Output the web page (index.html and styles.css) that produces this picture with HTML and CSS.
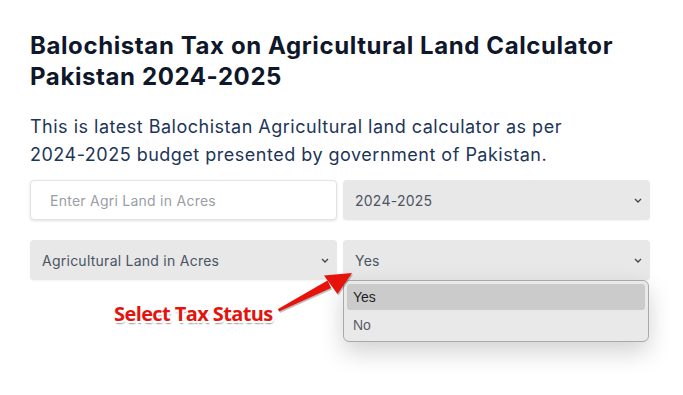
FILE: index.html
```html
<!DOCTYPE html>
<html lang="en">
<head>
<meta charset="utf-8">
<title>Balochistan Tax on Agricultural Land Calculator</title>
<link rel="stylesheet" href="styles.css">
</head>
<body>
<main class="page">
  <h1 class="title">Balochistan Tax on Agricultural Land Calculator Pakistan 2024-2025</h1>
  <p class="intro">This is latest Balochistan Agricultural land calculator as per 2024-2025 budget presented by government of Pakistan.</p>
  <div class="form">
    <div class="field input"><span class="placeholder">Enter Agri Land in Acres</span></div>
    <div class="field select"><span>2024-2025</span><svg class="chev" viewBox="0 0 8 5"><path d="M1 1l3 3 3-3" fill="none" stroke="#444" stroke-width="1.3"/></svg></div>
    <div class="field select"><span>Agricultural Land in Acres</span><svg class="chev" viewBox="0 0 8 5"><path d="M1 1l3 3 3-3" fill="none" stroke="#444" stroke-width="1.3"/></svg></div>
    <div class="field select open"><span>Yes</span><svg class="chev" viewBox="0 0 8 5"><path d="M1 1l3 3 3-3" fill="none" stroke="#444" stroke-width="1.3"/></svg>
      <ul class="menu">
        <li class="opt active">Yes</li>
        <li class="opt">No</li>
      </ul>
    </div>
  </div>
  <div class="note">Select Tax Status</div>
  <svg class="arrow" viewBox="0 0 683 395" width="683" height="395">
    <g transform="translate(1,1.5)" fill="rgba(0,0,0,0.25)">
      <polygon points="278,309 279,311.5 331,288 327.5,280.5"/>
      <polygon points="352,273 324,275.5 337.5,294"/>
    </g>
    <g fill="#e8120c">
      <polygon points="278,309 279,311.5 331,288 327.5,280.5"/>
      <polygon points="352,273 324,275.5 337.5,294"/>
    </g>
  </svg>
</main>
</body>
</html>
```
FILE: styles.css
```css
html, body {
  margin: 0;
  padding: 0;
  background: #ffffff;
}
.page {
  position: relative;
  width: 683px;
  height: 395px;
  box-sizing: border-box;
  padding: 30px 33px 0 30px;
  font-family: Inter, "Noto Sans", sans-serif;
}
.title {
  margin: 0;
  font-size: 24px;
  line-height: 31px;
  font-weight: 700;
  color: #0f172a;
  letter-spacing: 0.6px;
}
.intro {
  margin: 21px 0 0 0;
  width: 545px;
  font-size: 18px;
  line-height: 28px;
  font-weight: 400;
  color: #1d3557;
  letter-spacing: 0.5px;
}
.form {
  margin-top: 11px;
  display: grid;
  grid-template-columns: 307px 307px;
  column-gap: 6px;
  row-gap: 20px;
}
.field {
  position: relative;
  height: 40px;
  box-sizing: border-box;
  border-radius: 4px;
  display: flex;
  align-items: center;
  font-size: 14px;
  letter-spacing: 0.25px;
}
.input {
  background: #ffffff;
  border: 1px solid #e3e3e3;
  box-shadow: 0 1px 3px rgba(0,0,0,0.12);
  padding-left: 19px;
}
.placeholder {
  color: #9a9ea6;
}
.select {
  background: #e8e8e8;
  box-shadow: 0 1px 2px rgba(0,0,0,0.05);
  padding: 0 8px 0 12px;
  color: #4b5563;
  justify-content: space-between;
}
.chev {
  width: 8px;
  height: 5px;
}
.menu {
  position: absolute;
  top: 40px;
  left: 0;
  width: 306px;
  height: 62px;
  box-sizing: border-box;
  margin: 0;
  padding: 3px;
  list-style: none;
  background: #e9e9e9;
  border: 1px solid #a9a9a9;
  border-radius: 6px;
  box-shadow: 0 10px 24px rgba(0,0,0,0.18);
  font-family: "Liberation Sans", Arial, sans-serif;
  font-size: 14px;
  letter-spacing: 0;
  z-index: 2;
}
.opt {
  height: 26px;
  line-height: 26px;
  padding-left: 6px;
  color: #5b5b66;
  border-radius: 3px;
  margin-bottom: 2px;
}
.opt.active {
  background: #cbcbcb;
  color: #1f1f1f;
}
.note {
  position: absolute;
  left: 114px;
  top: 300px;
  font-family: "Open Sans", sans-serif;
  font-weight: 700;
  font-size: 20px;
  letter-spacing: -0.6px;
  color: #e2140e;
  text-shadow: -1.5px -1.5px 0 #fff, 1.5px -1.5px 0 #fff, -1.5px 1.5px 0 #fff, 1.5px 1.5px 0 #fff, 0 -1.5px 0 #fff, 0 1.5px 0 #fff, 1px 2.5px 1.5px rgba(0,0,0,0.4);
  z-index: 3;
}
.arrow {
  position: absolute;
  left: 0;
  top: 0;
  pointer-events: none;
  z-index: 3;
}
```
